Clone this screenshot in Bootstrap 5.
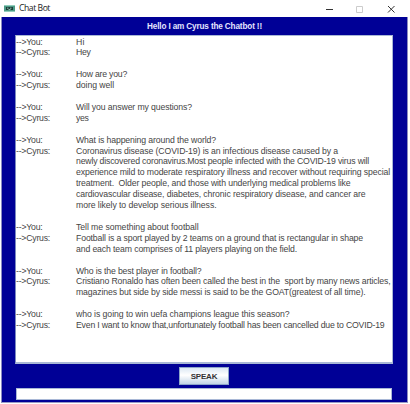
<!DOCTYPE html>
<html lang="en">
<head>
<meta charset="utf-8">
<title>Chat Bot</title>
<link rel="stylesheet" href="https://cdn.jsdelivr.net/npm/bootstrap@5.3.0/dist/css/bootstrap.min.css">
<style>
body{width:410px;height:404px;background:#fff;font-family:"Liberation Sans",Arial,sans-serif}
.bot-window{width:408px;height:403px;padding-left:1px}
.title-bar{height:17px;padding:0 8px 0 3px;font:8.6px/17px "Open Sans","Noto Sans",sans-serif;color:#222}
.title-bar svg{display:block}
.bot-body{height:386px;background:#000096;border:1px solid #8c8cc0;border-top:0;border-bottom-color:#9a9ac4}
.greeting{height:18px;font-size:8.2px;font-weight:700;line-height:19px;color:#e4e4ff}
.transcript{width:378px;height:329px;margin-left:13px;background:#fff;border:1px solid #a9b8d6;border-left-color:#7c8bbf;border-bottom-width:2px;font-size:8.7px;line-height:10.92px;color:#454545;padding-top:.5px}
.chat-line{height:10.92px;white-space:pre}
.speaker{width:60px;flex:none}
.speak-btn{width:50px;height:18px;margin-top:3px;margin-right:1px;border:1px solid #8ea6c8;border-radius:0;padding:0;font-size:8px;line-height:17px;font-weight:700;color:#333;background:linear-gradient(#dce8f4,#fff 45%,#c3d5e7)}
.entry{width:376px;height:12px;margin:3px 0 0 14px;border:1px solid #a9b8d6;border-radius:0;padding:0;min-height:0;background:#fff}
</style>
<script src="https://cdn.jsdelivr.net/npm/bootstrap@5.3.0/dist/js/bootstrap.bundle.min.js"></script>
</head>
<body class="m-0 overflow-hidden">
<main class="bot-window d-flex flex-column">
<header class="title-bar d-flex align-items-center">
<svg width="11" height="7" viewBox="0 0 11 7"><path fill="#4c9a86" d="M0 0h11v7H0z"/><path fill="#92cdbb" d="M0 0h11v1H0zM0 6h11v1H0z"/><path fill="#173f37" d="M2 2h7v3H2z"/><path stroke="#b9dcd0" stroke-width=".8" d="M3 3.2h1.500M6 3.2h1.500M4.500 4.500h2"/></svg>
<span class="fit ms-1" data-w="31">Chat Bot</span>
<div class="ms-auto"><svg width="74" height="12" viewBox="0 0 74 12" fill="none"><path stroke="#333" d="M0 6.5h7"/><path stroke="#ccc" d="M30.5 3.5h6v6h-6z"/><path stroke="#333" stroke-width="1" d="M62 3l6.5 6.5M68.500 3l-6.500 6.500"/></svg></div>
</header>
<section class="bot-body">
<div class="greeting text-center"><span class="fit" data-w="115">Hello I am Cyrus the Chatbot !!</span></div>
<div class="transcript" id="log"></div>
<div class="d-flex justify-content-center"><button class="btn speak-btn"><span class="fit" data-w="26.5">SPEAK</span></button></div>
<input class="form-control entry" type="text" aria-label="Message">
</section>
</main>
<script>
const lines=[["You","Hi",8.5],["Cyrus","Hey",14.5],[],
["You","How are you?",51],["Cyrus","doing well",38],[],
["You","Will you answer my questions?",116],["Cyrus","yes",12.5],[],
["You","What is happening around the world?",140],
["Cyrus","Coronavirus disease (COVID-19) is an infectious disease caused by a",262],
["","newly discovered coronavirus.Most people infected with the COVID-19 virus will",293],
["","experience mild to moderate respiratory illness and recover without requiring special",314],
["","treatment.  Older people, and those with underlying medical problems like",274.5],
["","cardiovascular disease, diabetes, chronic respiratory disease, and cancer are",289.5],
["","more likely to develop serious illness.",140.5],[],
["You","Tell me something about football",122.5],
["Cyrus","Football is a sport played by 2 teams on a ground that is rectangular in shape",287],
["","and each team comprises of 11 players playing on the field.",221],[],
["You","Who is the best player in football?",125.5],
["Cyrus","Cristiano Ronaldo has often been called the best in the  sport by many news articles,",314.5],
["","magazines but side by side messi is said to be the GOAT(greatest of all time).",289.5],[],
["You","who is going to win uefa champions league this season?",213.5],
["Cyrus","Even I want to know that,unfortunately football has been cancelled due to COVID-19",308.5]];
const log=document.getElementById("log");
for(const [who,text,w] of lines){
 const row=document.createElement("div");row.className="chat-line d-flex";
 if(text){
  const s=document.createElement("div");s.className="speaker";
  if(who){const n=document.createElement("span");n.className="fit";n.dataset.w=who==="You"?26.5:34;n.textContent="-->"+who+":";s.append(n);}
  const t=document.createElement("span");t.className="fit";t.dataset.w=w;t.textContent=text;row.append(s,t);
 }
 log.append(row);
}
document.querySelectorAll(".fit").forEach(e=>{
 e.style.letterSpacing=(e.dataset.w-e.getBoundingClientRect().width)/e.textContent.length+"px";
});
</script>
</body>
</html>
